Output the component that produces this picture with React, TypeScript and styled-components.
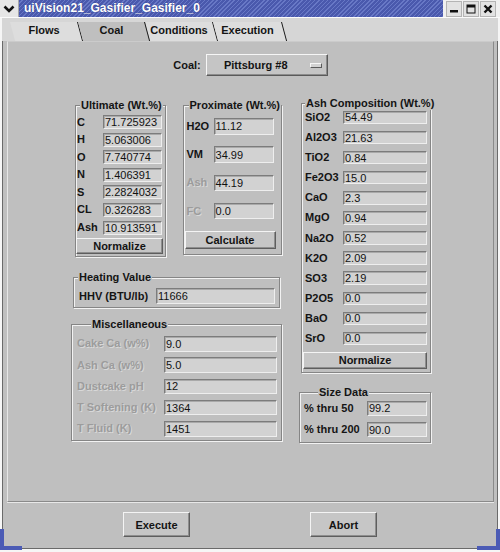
import React from "react";
import styled, { createGlobalStyle } from "styled-components";

const PANEL = "#bfbfbf";
const INK = "#141414";

const Global = createGlobalStyle`
  html, body { margin: 0; padding: 0; background: #ffffff; }
  body { font-family: "Liberation Sans", Arial, Helvetica, sans-serif; }
  * { box-sizing: border-box; }
`;

const Window = styled.div`
  position: relative;
  width: 500px;
  height: 552px;
  display: flex;
  flex-direction: column;
  background: ${PANEL};
  overflow: hidden;
  &::before,
  &::after {
    content: "";
    position: absolute;
    bottom: 2px;
    height: 17px;
    border-bottom: 4px solid #4b5bb5;
  }
  &::before {
    left: 0;
    width: 18px;
    border-left: 4px solid #4b5bb5;
  }
  &::after {
    right: 0;
    width: 19px;
    border-right: 4px solid #4b5bb5;
  }
`;

const TitleBar = styled.div`
  height: 18px;
  display: flex;
  background: #f2f2f2;
  border-bottom: 1px solid #fbfbfb;
`;

const MenuBox = styled.div`
  width: 19px;
  height: 17px;
  display: flex;
  align-items: center;
  justify-content: center;
  background: #e6e6e6;
  border-right: 1px solid #a8a8a8;
`;

const TitleStrip = styled.div`
  flex: 1;
  height: 17px;
  background: repeating-linear-gradient(135deg, #4a59ad 0 2px, #6878c6 2px 3px);
  color: #ffffff;
  font-weight: bold;
  font-size: 12px;
  line-height: 17px;
  padding-left: 5px;
  white-space: nowrap;
  text-shadow: 0 0 1px #2a3578;
`;

const WinButtons = styled.div`
  display: flex;
  gap: 1px;
  padding: 1px 4px 0 3px;
  background: #f0f0f0;
`;

const WinButton = styled.div`
  width: 16px;
  height: 16px;
  display: flex;
  align-items: center;
  justify-content: center;
  background: #e2e2e2;
  border: 1px solid #b4b4b4;
`;

const Frame = styled.div`
  flex: 1;
  display: flex;
  flex-direction: column;
  border-style: solid;
  border-color: #f6f6f6;
  border-width: 0 2px 3px 2px;
  box-shadow: inset 1px 0 0 #6a6a6a, inset -1px 0 0 #6a6a6a, inset 0 -1px 0 #6a6a6a;
`;

const TabStrip = styled.div`
  height: 23px;
  display: flex;
  align-items: flex-end;
  padding-left: 8px;
  background: #d6d6d6;
`;

const Tab = styled.div<{ $w: number; $active?: boolean }>`
  position: relative;
  z-index: ${(p) => (p.$active ? 1 : 0)};
  width: ${(p) => p.$w}px;
  height: 19px;
  padding-bottom: 3px;
  display: flex;
  align-items: center;
  justify-content: center;
  font-weight: bold;
  font-size: 11px;
  color: ${INK};
  &::before {
    content: "";
    position: absolute;
    inset: 0;
    z-index: -1;
    background: ${(p) => (p.$active ? PANEL : "#dddddd")};
    border-right: 1px solid #1c1c1c;
    transform: skewX(15deg);
    transform-origin: top left;
  }
`;

const Panel = styled.div`
  margin: 0 4px 0 5px;
  height: 461px;
  display: flex;
  flex-direction: column;
  background: ${PANEL};
  border-top: 1px solid #cbcbcb;
  border-left: 1px solid #e6e6e6;
  border-right: 1px solid #8a8a8a;
  border-bottom: 1px solid #8a8a8a;
  box-shadow: 0 1px 0 #e8e8e8;
`;

const CoalRow = styled.div`
  display: flex;
  justify-content: center;
  align-items: center;
  gap: 5px;
  padding-top: 12px;
`;

const BoldText = styled.span`
  font-weight: bold;
  font-size: 11px;
  color: ${INK};
  white-space: nowrap;
`;

const OptionMenu = styled.div`
  width: 122px;
  height: 22px;
  display: flex;
  align-items: center;
  background: #c5c5c5;
  border: 1px solid;
  border-color: #f6f6f6 #5a5a5a #5a5a5a #f6f6f6;
  box-shadow: inset -1px -1px 0 #8c8c8c;
`;

const OptionText = styled(BoldText)`
  flex: 1;
  text-align: center;
`;

const OptionIndicator = styled.span`
  width: 12px;
  height: 5px;
  margin: 0 5px;
  background: #d2d2d2;
  border: 1px solid;
  border-color: #f6f6f6 #5a5a5a #5a5a5a #f6f6f6;
`;

const Body = styled.div`
  display: flex;
  padding-left: 63px;
`;

const Column = styled.div<{ $w: number; $ml?: number }>`
  width: ${(p) => p.$w}px;
  margin-left: ${(p) => p.$ml ?? 0}px;
  display: flex;
  flex-direction: column;
`;

const GroupRow = styled.div<{ $mt: number }>`
  display: flex;
  align-items: flex-start;
  margin-top: ${(p) => p.$mt}px;
`;

const Group = styled.div<{ $mt?: number; $ml?: number; $w: number; $pb: number }>`
  margin-top: ${(p) => p.$mt ?? 0}px;
  margin-left: ${(p) => p.$ml ?? 0}px;
  width: ${(p) => p.$w}px;
  padding-bottom: ${(p) => p.$pb}px;
  display: flex;
  flex-direction: column;
  border: 1px solid #858585;
  box-shadow: 1px 1px 0 #f2f2f2, inset 1px 1px 0 #f2f2f2;
`;

const GroupTitle = styled.div<{ $indent: number }>`
  align-self: flex-start;
  margin: -7px 0 0 ${(p) => p.$indent}px;
  padding: 0 1px;
  height: 13px;
  line-height: 13px;
  background: ${PANEL};
  font-weight: bold;
  font-size: 11px;
  color: ${INK};
  white-space: nowrap;
`;

const FieldGrid = styled.div<{ $cols: string; $row: number; $gap: number; $mt: number; $pl: number }>`
  display: grid;
  grid-template-columns: ${(p) => p.$cols};
  grid-auto-rows: ${(p) => p.$row}px;
  row-gap: ${(p) => p.$gap}px;
  margin-top: ${(p) => p.$mt}px;
  padding-left: ${(p) => p.$pl}px;
  align-items: center;
`;

const Label = styled.div<{ $disabled?: boolean }>`
  font-weight: bold;
  font-size: 11px;
  line-height: 13px;
  white-space: nowrap;
  color: ${(p) => (p.$disabled ? "#9c9c9c" : INK)};
  text-shadow: ${(p) => (p.$disabled ? "1px 1px 0 #d8d8d8" : "none")};
`;

const Field = styled.div`
  height: 100%;
  display: flex;
  align-items: center;
  padding-left: 1px;
  background: #d2d2d2;
  border: 1px solid;
  border-color: #7c7c7c #eeeeee #eeeeee #7c7c7c;
  box-shadow: inset 1px 1px 0 #a9a9a9;
  font-size: 11px;
  color: #111111;
  white-space: nowrap;
  overflow: hidden;
`;

const RaisedButton = styled.button<{ $w: number; $h: number; $mt?: number; $ml?: number }>`
  width: ${(p) => p.$w}px;
  height: ${(p) => p.$h}px;
  margin: ${(p) => p.$mt ?? 0}px 0 0 ${(p) => p.$ml ?? 0}px;
  padding: 0;
  background: #c6c6c6;
  border: 1px solid;
  border-color: #f4f4f4 #5e5e5e #5e5e5e #f4f4f4;
  box-shadow: inset -1px -1px 0 #8e8e8e;
  font-family: inherit;
  font-weight: bold;
  font-size: 11px;
  color: ${INK};
`;

const Footer = styled.div`
  display: flex;
  justify-content: center;
  gap: 120px;
  padding-top: 10px;
`;

type Row = { label: string; value: string; disabled?: boolean };

const ultimate: Row[] = [
  { label: "C", value: "71.725923" },
  { label: "H", value: "5.063006" },
  { label: "O", value: "7.740774" },
  { label: "N", value: "1.406391" },
  { label: "S", value: "2.2824032" },
  { label: "CL", value: "0.326283" },
  { label: "Ash", value: "10.913591" },
];

const proximate: Row[] = [
  { label: "H2O", value: "11.12" },
  { label: "VM", value: "34.99" },
  { label: "Ash", value: "44.19", disabled: true },
  { label: "FC", value: "0.0", disabled: true },
];

const ash: Row[] = [
  { label: "SiO2", value: "54.49" },
  { label: "Al2O3", value: "21.63" },
  { label: "TiO2", value: "0.84" },
  { label: "Fe2O3", value: "15.0" },
  { label: "CaO", value: "2.3" },
  { label: "MgO", value: "0.94" },
  { label: "Na2O", value: "0.52" },
  { label: "K2O", value: "2.09" },
  { label: "SO3", value: "2.19" },
  { label: "P2O5", value: "0.0" },
  { label: "BaO", value: "0.0" },
  { label: "SrO", value: "0.0" },
];

const misc: Row[] = [
  { label: "Cake Ca (w%)", value: "9.0", disabled: true },
  { label: "Ash Ca (w%)", value: "5.0", disabled: true },
  { label: "Dustcake pH", value: "12", disabled: true },
  { label: "T Softening (K)", value: "1364", disabled: true },
  { label: "T Fluid (K)", value: "1451", disabled: true },
];

const sizeData: Row[] = [
  { label: "% thru 50", value: "99.2" },
  { label: "% thru 200", value: "90.0" },
];

const Rows: React.FC<{ rows: Row[] }> = ({ rows }) => (
  <>
    {rows.map((r) => (
      <React.Fragment key={r.label + r.value}>
        <Label $disabled={r.disabled}>{r.label}</Label>
        <Field>{r.value}</Field>
      </React.Fragment>
    ))}
  </>
);

export default function App() {
  return (
    <>
      <Global />
      <Window>
        <TitleBar>
          <MenuBox>
            <svg width="12" height="8" viewBox="0 0 12 8">
              <polyline points="1.5,1.5 6,6 10.5,1.5" fill="none" stroke="#111" strokeWidth="2.6" />
            </svg>
          </MenuBox>
          <TitleStrip>uiVision21_Gasifier_Gasifier_0</TitleStrip>
          <WinButtons>
            <WinButton>
              <svg width="10" height="10" viewBox="0 0 10 10">
                <rect x="1" y="6" width="8" height="2.5" fill="#111" />
              </svg>
            </WinButton>
            <WinButton>
              <svg width="10" height="10" viewBox="0 0 10 10">
                <rect x="1" y="1" width="8" height="8" fill="none" stroke="#111" strokeWidth="1" />
                <rect x="1" y="1" width="8" height="2.5" fill="#111" />
              </svg>
            </WinButton>
            <WinButton>
              <svg width="10" height="10" viewBox="0 0 10 10">
                <path d="M1.5 1.5 L8.5 8.5 M8.5 1.5 L1.5 8.5" stroke="#111" strokeWidth="2.4" />
              </svg>
            </WinButton>
          </WinButtons>
        </TitleBar>
        <Frame>
          <TabStrip>
            <Tab $w={68}>Flows</Tab>
            <Tab $w={67} $active>
              Coal
            </Tab>
            <Tab $w={68}>Conditions</Tab>
            <Tab $w={69}>Execution</Tab>
          </TabStrip>
          <Panel>
            <CoalRow>
              <BoldText>Coal:</BoldText>
              <OptionMenu>
                <OptionText>Pittsburg #8</OptionText>
                <OptionIndicator />
              </OptionMenu>
            </CoalRow>
            <Body>
              <Column $w={211}>
                <GroupRow $mt={29}>
                  <Group $ml={4} $w={92} $pb={2}>
                    <GroupTitle $indent={4}>Ultimate (Wt.%)</GroupTitle>
                    <FieldGrid $cols="26px 59px" $row={14} $gap={3.6} $mt={3} $pl={1}>
                      <Rows rows={ultimate} />
                    </FieldGrid>
                    <RaisedButton $w={87} $h={16.5} $mt={3}>
                      Normalize
                    </RaisedButton>
                  </Group>
                  <Group $ml={17} $w={100} $pb={5}>
                    <GroupTitle $indent={5}>Proximate (Wt.%)</GroupTitle>
                    <FieldGrid $cols="27px 60px" $row={16.5} $gap={11.8} $mt={6} $pl={3}>
                      <Rows rows={proximate} />
                    </FieldGrid>
                    <RaisedButton $w={91} $h={17.8} $mt={12} $ml={1}>
                      Calculate
                    </RaisedButton>
                  </Group>
                </GroupRow>
                <Group $mt={20} $ml={2} $w={207} $pb={3.3}>
                  <GroupTitle $indent={4}>Heating Value</GroupTitle>
                  <FieldGrid $cols="77px 119px" $row={15.7} $gap={0} $mt={4.3} $pl={5}>
                    <Rows rows={[{ label: "HHV (BTU/lb)", value: "11666" }]} />
                  </FieldGrid>
                </Group>
                <Group $mt={16} $w={211} $pb={3}>
                  <GroupTitle $indent={19}>Miscellaneous</GroupTitle>
                  <FieldGrid $cols="87px 113px" $row={15.5} $gap={5.75} $mt={4.7} $pl={5}>
                    <Rows rows={misc} />
                  </FieldGrid>
                </Group>
              </Column>
              <Column $w={132} $ml={17}>
                <Group $mt={27} $ml={2} $w={130} $pb={3}>
                  <GroupTitle $indent={3}>Ash Composition (Wt.%)</GroupTitle>
                  <FieldGrid $cols="38px 84px" $row={13.5} $gap={6.6} $mt={0.7} $pl={3}>
                    <Rows rows={ash} />
                  </FieldGrid>
                  <RaisedButton $w={124} $h={17.6} $mt={6.4} $ml={1}>
                    Normalize
                  </RaisedButton>
                </Group>
                <Group $mt={18.7} $w={132} $pb={4.7}>
                  <GroupTitle $indent={18}>Size Data</GroupTitle>
                  <FieldGrid $cols="63px 60px" $row={15} $gap={6.3} $mt={2} $pl={4}>
                    <Rows rows={sizeData} />
                  </FieldGrid>
                </Group>
              </Column>
            </Body>
          </Panel>
          <Footer>
            <RaisedButton $w={67} $h={25}>
              Execute
            </RaisedButton>
            <RaisedButton $w={67} $h={25}>
              Abort
            </RaisedButton>
          </Footer>
        </Frame>
      </Window>
    </>
  );
}
